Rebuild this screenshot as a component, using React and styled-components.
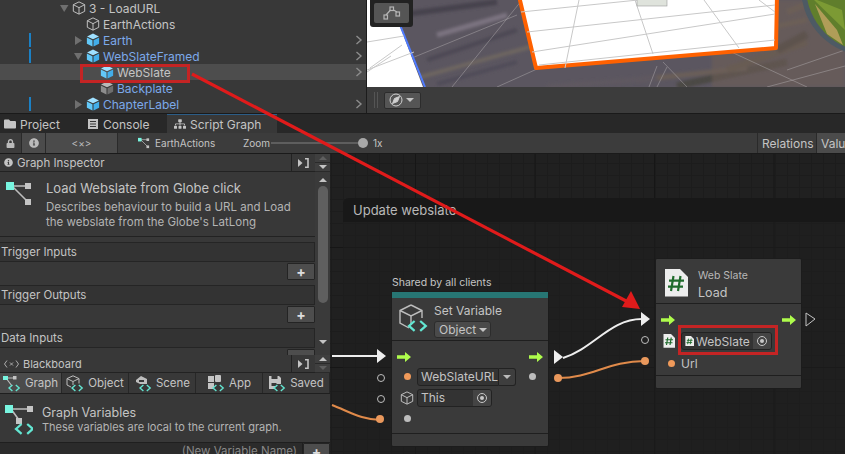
import React from 'react';
import styled, { createGlobalStyle } from 'styled-components';
import { FaLock, FaInfoCircle, FaFolder, FaSitemap } from 'react-icons/fa';

const GlobalStyle = createGlobalStyle`
  html, body {
    margin: 0;
    padding: 0;
    background: #282828;
    overflow: hidden;
  }
  * {
    box-sizing: border-box;
  }
`;

const Page = styled.div`
  position: relative;
  width: 845px;
  height: 454px;
  display: flex;
  flex-direction: column;
  overflow: hidden;
  font-family: Inter, "Liberation Sans", sans-serif;
  color: #c4c4c4;
  background: #282828;
`;

/* ---------- top area ---------- */

const TopArea = styled.div`
  display: flex;
  height: 114px;
  flex: none;
  border-bottom: 1px solid #1a1a1a;
`;

const Hierarchy = styled.div`
  width: 367px;
  flex: none;
  background: #383838;
  border-right: 1px solid #1c1c1c;
  overflow: hidden;
`;

const TreeRow = styled.div`
  position: relative;
  display: flex;
  align-items: center;
  height: 16px;
  padding-left: ${p => 60 + p.$depth * 14}px;
  font-size: 12px;
  background: ${p => (p.$selected ? '#4d4d4d' : 'transparent')};
  color: ${p => (p.$prefab ? '#7ca9ea' : '#c4c4c4')};
  &:first-child {
    margin-top: 0;
  }
`;

const Foldout = styled.span`
  width: 12px;
  flex: none;
  display: flex;
  align-items: center;
`;

const TreeIcon = styled.span`
  width: 17px;
  flex: none;
  display: flex;
  align-items: center;
`;

const ChangeBar = styled.span`
  position: absolute;
  left: 29px;
  top: 1px;
  bottom: 1px;
  width: 2px;
  background: #1b80c4;
`;

const RowChevron = styled.svg`
  position: absolute;
  right: 3px;
  top: 3px;
  width: 8px;
  height: 10px;
`;

const SceneView = styled.div`
  flex: 1;
  display: flex;
  flex-direction: column;
  min-width: 0;
`;

const SceneCanvas = styled.div`
  position: relative;
  height: 87px;
  flex: none;
  background: #5b5560;
  overflow: hidden;
`;

const SceneArt = styled.svg`
  display: block;
`;

const OverlayTool = styled.div`
  position: absolute;
  left: 3px;
  top: -3px;
  width: 43px;
  height: 30px;
  padding: 6px 4px 4px;
  background: #222;
  border-radius: 3px;
`;

const OverlayButton = styled.div`
  height: 20px;
  background: #555;
  border-radius: 2px;
  display: flex;
  align-items: center;
  justify-content: center;
`;

const SceneBar = styled.div`
  flex: 1;
  display: flex;
  align-items: center;
  gap: 6px;
  padding-left: 7px;
  background: #3c3c3c;
`;

const Grip = styled.span`
  width: 4px;
  height: 16px;
  border-left: 1px solid #555;
  border-right: 1px solid #555;
`;

const GizmoButton = styled.div`
  width: 37px;
  height: 17px;
  background: #555;
  border: 1px solid #2c2c2c;
  border-radius: 2px;
  display: flex;
  align-items: center;
  gap: 3px;
  padding-left: 4px;
`;

const ArrowDown = styled.span`
  width: 0;
  height: 0;
  border-left: ${p => p.$size || 4}px solid transparent;
  border-right: ${p => p.$size || 4}px solid transparent;
  border-top: ${p => p.$size || 4}px solid ${p => p.$color || '#c4c4c4'};
`;

const ArrowUp = styled.span`
  width: 0;
  height: 0;
  border-left: 4px solid transparent;
  border-right: 4px solid transparent;
  border-bottom: 4px solid ${p => p.$color || '#c4c4c4'};
`;

/* ---------- tabs + toolbar ---------- */

const TabStrip = styled.div`
  display: flex;
  height: 19px;
  flex: none;
  background: #282828;
`;

const Tab = styled.div`
  width: ${p => p.$w}px;
  display: flex;
  align-items: center;
  gap: 4px;
  padding-left: ${p => p.$pad}px;
  font-size: 12px;
  background: ${p => (p.$active ? '#383838' : 'transparent')};
  border-top: 1px solid ${p => (p.$active ? '#2c5d87' : 'transparent')};
`;

const GraphToolbar = styled.div`
  display: flex;
  align-items: stretch;
  height: 21px;
  flex: none;
  background: #3c3c3c;
  border-bottom: 1px solid #1a1a1a;
  font-size: 10px;
`;

const ToolButton = styled.div`
  width: ${p => p.$w}px;
  flex: none;
  display: flex;
  align-items: center;
  justify-content: center;
  background: ${p => (p.$on ? '#4b4b4b' : 'transparent')};
  border-right: 1px solid #2a2a2a;
  color: #bbb;
`;

const Crumb = styled.div`
  display: flex;
  align-items: center;
  gap: 5px;
  padding-left: 20px;
  width: 125px;
  flex: none;
`;

const ZoomLabel = styled.div`
  display: flex;
  align-items: center;
  width: 28px;
  flex: none;
`;

const ZoomTrack = styled.div`
  position: relative;
  width: 94px;
  height: 2px;
  flex: none;
  align-self: center;
  background: #5e5e5e;
`;

const ZoomThumb = styled.span`
  position: absolute;
  right: -3px;
  top: -4px;
  width: 10px;
  height: 10px;
  border-radius: 50%;
  background: #a8a8a8;
`;

const ZoomValue = styled.div`
  display: flex;
  align-items: center;
  margin-left: 8px;
`;

const ToolSpacer = styled.div`
  flex: 1;
`;

const SideTab = styled.div`
  width: ${p => p.$w}px;
  flex: none;
  display: flex;
  align-items: center;
  padding-left: 4px;
  overflow: hidden;
  white-space: nowrap;
  font-size: 12px;
  background: ${p => (p.$on ? '#4b4b4b' : 'transparent')};
  border-left: 1px solid #2a2a2a;
`;

/* ---------- left panels ---------- */

const Workspace = styled.div`
  flex: 1;
  display: flex;
  min-height: 0;
`;

const Sidebar = styled.div`
  width: 330px;
  flex: none;
  display: flex;
  flex-direction: column;
  background: #383838;
`;

const PanelHeader = styled.div`
  display: flex;
  height: 18px;
  flex: none;
  font-size: ${p => p.$small ? 11 : 11.5}px;
`;

const PanelTitle = styled.div`
  flex: 1;
  display: flex;
  align-items: center;
  gap: 4px;
  padding-left: 4px;
  border-bottom: 1px solid #222;
  border-right: 1px solid #222;
`;

const PinButton = styled.div`
  width: 23px;
  flex: none;
  display: flex;
  align-items: center;
  justify-content: center;
  border-bottom: 1px solid #222;
`;

const UpDown = styled.div`
  width: 15px;
  flex: none;
  display: flex;
  flex-direction: column;
  background: #3f3f3f;
`;

const UpDownCell = styled.div`
  flex: 1;
  display: flex;
  align-items: center;
  justify-content: center;
  border-bottom: 1px solid #2a2a2a;
`;

const InspectorWrap = styled.div`
  display: flex;
  flex-direction: column;
  height: 201px;
  flex: none;
  overflow: hidden;
`;

const InspectorScroll = styled.div`
  flex: 1;
  display: flex;
  min-height: 0;
`;

const InspectorBody = styled.div`
  width: 315px;
  flex: none;
`;

const InspectorIntro = styled.div`
  display: flex;
  height: 65px;
  padding: 8px 0 0 6px;
  gap: 13px;
  border-bottom: 1px solid #222;
  margin-bottom: 5px;
`;

const IntroTitle = styled.div`
  font-size: 13px;
  line-height: 16px;
`;

const IntroText = styled.div`
  margin-top: 4px;
  font-size: 11.5px;
  line-height: 15px;
  color: #b4b4b4;
`;

const SectionHead = styled.div`
  height: 20px;
  display: flex;
  align-items: center;
  padding-left: 1px;
  font-size: 11.5px;
  background: #333;
  border-top: 1px solid #252525;
  border-bottom: 1px solid #252525;
  border-right: 1px solid #252525;
`;

const SectionList = styled.div`
  height: 23px;
  display: flex;
  justify-content: flex-end;
  padding-top: 1px;
`;

const AddButton = styled.div`
  width: ${p => p.$w || 28}px;
  height: 17px;
  display: flex;
  align-items: center;
  justify-content: center;
  background: #4d4d4d;
  border: 1px solid #242424;
  border-radius: 1px;
  color: #ddd;
  font-size: 14px;
  font-weight: 700;
  line-height: 1;
`;

const ScrollRail = styled.div`
  flex: 1;
  display: flex;
  flex-direction: column;
  align-items: center;
  padding-top: 6px;
  background: #3a3a3a;
`;

const ScrollThumb = styled.div`
  width: 10px;
  height: 117px;
  margin: 4px 0 37px;
  background: #5f5f5f;
  border-radius: 5px;
`;

const BlackboardTabs = styled.div`
  display: flex;
  height: 21px;
  flex: none;
  border-bottom: 1px solid #1f1f1f;
  font-size: 11.5px;
`;

const BoardTab = styled.div`
  flex: ${p => (p.$first ? '0 0 62px' : '1')};
  display: flex;
  align-items: center;
  justify-content: center;
  gap: 3px;
  background: ${p => (p.$on ? '#4b4b4b' : 'transparent')};
  border-right: 1px solid #272727;
`;

const BoardIntro = styled.div`
  display: flex;
  flex: none;
  height: 48px;
  padding: 11px 0 0 5px;
  gap: 9px;
`;

const BoardTitle = styled.div`
  font-size: 12.5px;
  line-height: 15px;
`;

const BoardText = styled.div`
  font-size: 11px;
  line-height: 15px;
  color: #b4b4b4;
`;

const NewVarRow = styled.div`
  flex: 1;
  display: flex;
  border-top: 1px solid #1f1f1f;
`;

const NewVarInput = styled.div`
  flex: 1;
  padding: 1px 5px 0 0;
  text-align: right;
  font-size: 11.5px;
  color: #888;
  background: #2b2b2b;
  border-right: 1px solid #1f1f1f;
`;

/* ---------- canvas ---------- */

const Canvas = styled.div`
  position: relative;
  flex: 1;
  overflow: hidden;
  background-color: #202020;
  background-image:
    linear-gradient(to right, #161616 1px, transparent 1px),
    linear-gradient(to bottom, #161616 1px, transparent 1px),
    linear-gradient(to right, #1c1c1c 1px, transparent 1px),
    linear-gradient(to bottom, #1c1c1c 1px, transparent 1px);
  background-size: 119.5px 120px, 119.5px 120px, 12px 12px, 12px 12px;
  background-position: 85px 93px, 85px 93px, 1px 9px, 1px 9px;
`;

const Group = styled.div`
  position: absolute;
  left: 13px;
  top: 44px;
  right: -20px;
  bottom: -20px;
  border-radius: 6px 0 0 0;
  background: rgba(32, 32, 32, 0.45);
`;

const GroupHead = styled.div`
  height: 24px;
  display: flex;
  align-items: center;
  padding-left: 10px;
  font-size: 13px;
  background: #181818;
  border-radius: 6px 0 0 0;
  color: #b8b8b8;
`;

const WireLayer = styled.svg`
  position: absolute;
  left: 0;
  top: 0;
`;

const NodeBox = styled.div`
  position: absolute;
  left: ${p => p.$x}px;
  top: ${p => p.$y}px;
  width: ${p => p.$w}px;
  background: #3a3a3a;
  border: 1px solid #1c1c1c;
  border-radius: 2px;
`;

const NodeNote = styled.div`
  position: absolute;
  left: 0;
  top: -16px;
  font-size: 10.5px;
  white-space: nowrap;
`;

const NodeAccent = styled.div`
  height: 6px;
  background: #277674;
`;

const NodeHead = styled.div`
  display: flex;
  height: ${p => p.$h}px;
  padding: ${p => p.$pad};
  gap: ${p => p.$gap}px;
  border-bottom: 1px solid #1f1f1f;
`;

const NodeTitle = styled.div`
  font-size: ${p => p.$size}px;
  line-height: ${p => p.$lh}px;
  color: ${p => p.$color || '#c4c4c4'};
`;

const TypeSelect = styled.div`
  width: 57px;
  height: 17px;
  margin-top: 2px;
  display: flex;
  align-items: center;
  gap: 3px;
  padding-left: 4px;
  font-size: 12px;
  background: #4a4a4a;
  border: 1px solid #2c2c2c;
  border-radius: 3px;
`;

const NodeBody = styled.div`
  position: relative;
  height: ${p => p.$h}px;
  border-bottom: 1px solid #1f1f1f;
`;

const NodeFoot = styled.div`
  height: 12px;
`;

const FlowRow = styled.div`
  display: flex;
  justify-content: space-between;
  align-items: center;
  padding: 6px 5px 0;
  height: ${p => p.$h}px;
`;

const FieldRow = styled.div`
  display: flex;
  align-items: center;
  height: ${p => p.$h}px;
  padding-left: ${p => p.$pad}px;
`;

const DotSlot = styled.span`
  width: ${p => p.$w}px;
  flex: none;
  display: flex;
  justify-content: center;
`;

const Dot = styled.span`
  width: ${p => p.$size || 7}px;
  height: ${p => p.$size || 7}px;
  border-radius: 50%;
  background: ${p => p.$color};
`;

const Field = styled.div`
  width: ${p => p.$w}px;
  height: 18px;
  display: flex;
  align-items: center;
  padding-left: 3px;
  font-size: 12px;
  background: #333;
  border: 1px solid #222;
  border-radius: 3px 0 0 3px;
  white-space: nowrap;
`;

const FieldChevron = styled.div`
  width: 18px;
  height: 18px;
  display: flex;
  align-items: center;
  justify-content: center;
  background: #3e3e3e;
  border: 1px solid #222;
  border-left: none;
  border-radius: 0 3px 3px 0;
`;

const ObjectField = styled.div`
  width: ${p => p.$w}px;
  height: 18px;
  display: flex;
  align-items: center;
  font-size: 12px;
  background: #333;
  border: 1px solid #222;
  border-radius: 3px;
  white-space: nowrap;
`;

const ObjectLabel = styled.div`
  flex: 1;
  display: flex;
  align-items: center;
  gap: 2px;
  padding-left: 3px;
`;

const TargetCell = styled.div`
  width: 18px;
  height: 100%;
  display: flex;
  align-items: center;
  justify-content: center;
  background: #444;
  border-radius: 0 2px 2px 0;
`;

const Target = styled.span`
  width: 10px;
  height: 10px;
  border: 1px solid #c8c8c8;
  border-radius: 50%;
  display: flex;
  align-items: center;
  justify-content: center;
  &::after {
    content: '';
    width: 4px;
    height: 4px;
    border-radius: 50%;
    background: #c8c8c8;
  }
`;

const SidePort = styled.span`
  position: absolute;
  left: ${p => p.$x}px;
  top: ${p => p.$y}px;
  width: 8px;
  height: 8px;
  border: 1px solid #bdbdbd;
  border-radius: 50%;
`;

const SideDot = styled.span`
  position: absolute;
  left: ${p => p.$x}px;
  top: ${p => p.$y}px;
  width: 8px;
  height: 8px;
  border-radius: 50%;
  background: ${p => p.$color || '#bdbdbd'};
`;

const Annotation = styled.svg`
  position: absolute;
  left: 0;
  top: 0;
  pointer-events: none;
`;

const RedBox = styled.div`
  position: absolute;
  left: ${p => p.$x}px;
  top: ${p => p.$y}px;
  width: ${p => p.$w}px;
  height: ${p => p.$h}px;
  border: 3px solid #c42424;
  pointer-events: none;
`;

/* ---------- drawn icons ---------- */

function Cube({ size = 14, color = '#c4c4c4' }) {
  return (
    <svg width={size} height={size} viewBox="0 0 16 16" fill="none" stroke={color} strokeWidth="1.1">
      <path d="M8 1 14.5 4.2V11.8L8 15 1.5 11.8V4.2Z" />
      <path d="M1.5 4.2 8 7.6 14.5 4.2M8 7.6V15" />
    </svg>
  );
}

function PrefabCube({ grey }) {
  const top = grey ? '#b9b9b9' : '#9fe0ff';
  const left = grey ? '#8d8d8d' : '#62c8f8';
  const right = grey ? '#6e6e6e' : '#42aeea';
  return (
    <svg width="14" height="14" viewBox="0 0 16 16">
      <path d="M8 .6 14.8 4 8 7.2 1.2 4Z" fill={top} />
      <path d="M1 5 7.4 8.2V15.4L1 12.2Z" fill={left} />
      <path d="M15 5 8.6 8.2V15.4L15 12.2Z" fill={right} />
    </svg>
  );
}

function Tri({ open }) {
  return (
    <svg width="9" height="9" viewBox="0 0 9 9">
      <path d={open ? 'M0 1H8.5L4.2 8Z' : 'M1 0 8 4.5 1 9Z'} fill="#6f6f6f" />
    </svg>
  );
}

function Chevron() {
  return (
    <RowChevron viewBox="0 0 8 10" fill="none" stroke="#8c8c8c" strokeWidth="1.4">
      <path d="M1.5 1 6 5 1.5 9" />
    </RowChevron>
  );
}

function VarBrackets({ x = 0, y = 0, w = 1 }) {
  return (
    <g transform={`translate(${x} ${y}) scale(${w})`} fill="none" stroke="#63e6d2" strokeWidth="1.6">
      <path d="M4 0 0 3.5 4 7M8 0 12 3.5 8 7" />
    </g>
  );
}

function GraphGlyph({ size = 27, teal = true }) {
  return (
    <svg width={size} height={size} viewBox="0 0 27 27">
      <path d="M6 6H22M6 6 22 22" stroke="#bdbdbd" strokeWidth="1.6" fill="none" />
      <rect x="0" y="2" width="8" height="8" fill={teal ? '#78f5e0' : '#bbb'} />
      <rect x="19" y="3" width="6" height="6" fill="#c4c4c4" />
      <rect x="19" y="19" width="6" height="6" fill="#c4c4c4" />
    </svg>
  );
}

function PanelPin() {
  return (
    <svg width="11" height="10" viewBox="0 0 11 10">
      <path d="M0 1 4.5 5 0 9Z" fill="#c4c4c4" />
      <path d="M7 .8H10V9.2H7" fill="none" stroke="#c4c4c4" strokeWidth="1.6" />
    </svg>
  );
}

function HashDoc({ size = 24, tiny }) {
  return (
    <svg width={size} height={size * 1.17} viewBox="0 0 24 28">
      <path d="M1 0H16L24 8V27.5H1Z" fill="#ededed" />
      <path d="M9.5 7 7 22M16.5 7 14 22M5 11.5H20M4 17.5H19" stroke="#1f6b2c" strokeWidth={tiny ? 2.4 : 2.2} fill="none" />
    </svg>
  );
}

function FlowArrow() {
  return (
    <svg width="14" height="10" viewBox="0 0 14 10">
      <path d="M0 3.2H8V0L14 5 8 10V6.8H0Z" fill="#aefc4c" />
    </svg>
  );
}

function BoardGlyph({ kind }) {
  return (
    <svg width="19" height="17" viewBox="0 0 19 17" fill="none">
      {kind === 'graph' && (
        <g>
          <path d="M3 3H12M3 3 9 11" stroke="#bdbdbd" strokeWidth="1.2" />
          <rect x="0" y="1" width="5" height="4" fill="#78f5e0" />
          <rect x="10" y="1" width="3.5" height="3.5" fill="#c4c4c4" />
        </g>
      )}
      {kind === 'object' && (
        <g stroke="#bdbdbd" strokeWidth="1">
          <path d="M7 .8 13 3.6V8.5M7 .8 1 3.6V10L5 12M1 3.6 7 6.5 13 3.6M7 6.5V10" />
        </g>
      )}
      {kind === 'scene' && (
        <g fill="#bdbdbd">
          <path d="M7 1 13 4V9L6 9 2 7 2 5Z" />
          <path d="M5 5H10V7H5Z" fill="#383838" />
        </g>
      )}
      {kind === 'app' && (
        <g fill="#c4c4c4">
          <rect x="1" y="1" width="6" height="6" />
          <rect x="8" y="0" width="6" height="7" rx="1" />
          <rect x="1" y="8" width="6" height="6" />
        </g>
      )}
      {kind === 'saved' && (
        <g>
          <path d="M1 1H11L13 3V9H7V14H1Z" fill="#c4c4c4" />
          <rect x="3.5" y="1" width="6" height="3" fill="#383838" />
          <rect x="3.5" y="8" width="5" height="3" fill="#383838" />
        </g>
      )}
      <VarBrackets x={6} y={10} w={0.85} />
    </svg>
  );
}

function SceneDrawing() {
  const streaks = [
    [60, 60, 150, 30, '#4d4a55', 5],
    [50, 78, 170, 45, '#6e6660', 4],
    [70, 35, 140, 15, '#7b7380', 5],
    [40, 14, 130, 2, '#46434e', 6],
    [70, 84, 150, 62, '#504c58', 4],
    [310, 86, 420, 62, '#4c4845', 7],
    [270, 80, 380, 68, '#6a5f59', 5],
    [360, 70, 440, 42, '#63574f', 7],
    [410, 50, 440, 34, '#4a4541', 8],
    [390, 30, 440, 20, '#6a6058', 5],
    [420, 12, 445, 2, '#6c5f55', 6],
    [180, 87, 290, 78, '#5f5860', 5],
  ];
  return (
    <SceneArt width="478" height="87" viewBox="0 0 478 87">
      <defs>
        <filter id="soft">
          <feGaussianBlur stdDeviation="1.6" />
        </filter>
      </defs>
      <rect width="478" height="87" fill="#5b5660" />
      <g filter="url(#soft)">
        {streaks.map(([a, b, c, d, col, w], i) => (
          <line key={i} x1={a} y1={b} x2={c} y2={d} stroke={col} strokeWidth={w} />
        ))}
        <rect x="345" y="0" width="133" height="87" fill="#6d5f58" opacity=".55" />
      </g>
      {/* floor grid */}
      <g stroke="#b6b2b4" strokeOpacity=".45" strokeWidth="1">
        <path d="M85 87 155 0M40 60 150 15M130 87 190 60M282 87 290 66M290 87 300 67M320 87 296 62M440 87 360 50M420 70 478 50M400 87 478 66M478 28 440 0" />
      </g>
      {/* white plane on the left */}
      <path d="M0 0H23L56 87H0Z" fill="#fff" />
      <path d="M23 0 58 87" stroke="#4f7bff" strokeWidth="2" />
      <g stroke="#c9c9c9" strokeWidth="1">
        <path d="M0 42 37 36M0 70 47 52M3 68 35 45M0 72 24 56" />
      </g>
      {/* globe */}
      <circle cx="502" cy="-12" r="68" fill="#4d5a64" />
      <circle cx="504" cy="-13" r="65" fill="#607e2c" />
      <path d="M448 4 470 30 476 45 460 34Z" fill="#c4a564" opacity=".8" />
      <path d="M445 -2 475 10 478 30Z" fill="#7c9a34" />
      {/* plate */}
      <path d="M152 -4 169 68 409 48 410 -4Z" fill="#fff" stroke="#ff6100" strokeWidth="4" strokeLinejoin="round" />
      <g stroke="#c8c8c8" strokeWidth="1" fill="none">
        <path d="M154 12 310 -4M160 32 408 5M165 52 408 14M172 65 408 40M212 0 198 68M268 0 286 54M337 0 372 48M392 0 408 12" />
      </g>
      <rect x="270" y="-3" width="30" height="9" fill="#dfe3dc" stroke="#999" strokeWidth=".6" />
    </SceneArt>
  );
}

/* ---------- data ---------- */

const treeRows = [
  { label: '3 - LoadURL', depth: 0, fold: 'open', icon: 'cube' },
  { label: 'EarthActions', depth: 1, icon: 'cube' },
  { label: 'Earth', depth: 1, fold: 'closed', icon: 'prefab', prefab: true, bar: true, chevron: true },
  { label: 'WebSlateFramed', depth: 1, fold: 'open', icon: 'prefab', prefab: true, bar: true, chevron: true },
  { label: 'WebSlate', depth: 2, icon: 'prefab', selected: true, chevron: true },
  { label: 'Backplate', depth: 2, icon: 'grey', prefab: true },
  { label: 'ChapterLabel', depth: 1, fold: 'closed', icon: 'prefab', prefab: true, bar: true, chevron: true },
];

const boardTabs = [
  { label: 'Graph', kind: 'graph', on: true },
  { label: 'Object', kind: 'object' },
  { label: 'Scene', kind: 'scene' },
  { label: 'App', kind: 'app' },
  { label: 'Saved', kind: 'saved' },
];

const sections = ['Trigger Inputs', 'Trigger Outputs', 'Data Inputs'];

function TreeItem({ row }) {
  return (
    <TreeRow $depth={row.depth} $selected={row.selected} $prefab={row.prefab}>
      {row.bar && <ChangeBar />}
      <Foldout>{row.fold && <Tri open={row.fold === 'open'} />}</Foldout>
      <TreeIcon>
        {row.icon === 'cube' && <Cube size={14} />}
        {row.icon === 'prefab' && <PrefabCube />}
        {row.icon === 'grey' && <PrefabCube grey />}
      </TreeIcon>
      {row.label}
      {row.chevron && <Chevron />}
    </TreeRow>
  );
}

export default function App() {
  return (
    <Page>
      <GlobalStyle />

      <TopArea>
        <Hierarchy>
          {treeRows.map(row => <TreeItem key={row.label} row={row} />)}
        </Hierarchy>
        <SceneView>
          <SceneCanvas>
            <SceneDrawing />
            <OverlayTool>
              <OverlayButton>
                <svg width="18" height="15" viewBox="0 0 18 15" fill="none" stroke="#b5b5b5" strokeWidth="1.2">
                  <rect x="1" y="9" width="3.5" height="4" />
                  <rect x="13" y="6" width="3.5" height="4" />
                  <rect x="7" y="1" width="3.5" height="3.5" />
                  <path d="M3 9 7.5 4M10.5 4 14 6" />
                </svg>
              </OverlayButton>
            </OverlayTool>
          </SceneCanvas>
          <SceneBar>
            <Grip />
            <GizmoButton>
              <svg width="14" height="14" viewBox="0 0 14 14" fill="none" stroke="#d0d0d0" strokeWidth="1">
                <circle cx="7" cy="7" r="6" />
                <path d="M10.5 3.5 8.5 8.5 3.5 10.5 5.5 5.5Z" fill="#d0d0d0" />
              </svg>
              <ArrowDown />
            </GizmoButton>
          </SceneBar>
        </SceneView>
      </TopArea>

      <TabStrip>
        <Tab $w={84} $pad={4}><FaFolder size={12} color="#c4c4c4" />Project</Tab>
        <Tab $w={83} $pad={3}>
          <svg width="12" height="12" viewBox="0 0 12 12">
            <path d="M1 1H11V11H1Z" fill="#c4c4c4" />
            <path d="M3 3.5H9M3 6H9M3 8.5H9" stroke="#383838" />
          </svg>
          Console
        </Tab>
        <Tab $w={110} $pad={7} $active><FaSitemap size={12} color="#c4c4c4" />Script Graph</Tab>
      </TabStrip>

      <GraphToolbar>
        <ToolButton $w={22}><FaLock size={9} /></ToolButton>
        <ToolButton $w={24} $on><FaInfoCircle size={10} /></ToolButton>
        <ToolButton $w={72} $on>{'<×>'}</ToolButton>
        <Crumb>
          <GraphGlyph size={12} />
          EarthActions
        </Crumb>
        <ZoomLabel>Zoom</ZoomLabel>
        <ZoomTrack><ZoomThumb /></ZoomTrack>
        <ZoomValue>1x</ZoomValue>
        <ToolSpacer />
        <SideTab $w={59}>Relations</SideTab>
        <SideTab $w={29} $on>Values</SideTab>
      </GraphToolbar>

      <Workspace>
        <Sidebar>
          <InspectorWrap>
            <PanelHeader>
              <PanelTitle><FaInfoCircle size={9} />Graph Inspector</PanelTitle>
              <PinButton><PanelPin /></PinButton>
              <UpDown>
                <UpDownCell><ArrowUp $color="#5f5f5f" /></UpDownCell>
                <UpDownCell><ArrowDown $color="#c4c4c4" /></UpDownCell>
              </UpDown>
            </PanelHeader>
            <InspectorScroll>
              <InspectorBody>
                <InspectorIntro>
                  <GraphGlyph />
                  <div>
                    <IntroTitle>Load Webslate from Globe click</IntroTitle>
                    <IntroText>
                      Describes behaviour to build a URL and Load<br />
                      the webslate from the Globe's LatLong
                    </IntroText>
                  </div>
                </InspectorIntro>
                {sections.map(name => (
                  <React.Fragment key={name}>
                    <SectionHead>{name}</SectionHead>
                    <SectionList><AddButton>+</AddButton></SectionList>
                  </React.Fragment>
                ))}
              </InspectorBody>
              <ScrollRail>
                <ArrowUp />
                <ScrollThumb />
                <ArrowDown />
              </ScrollRail>
            </InspectorScroll>
          </InspectorWrap>

          <PanelHeader $small>
            <PanelTitle>
              <svg width="15" height="8" viewBox="0 0 15 8" fill="none" stroke="#aaa" strokeWidth="1">
                <path d="M3 .5 .5 4 3 7.5M12 .5 14.5 4 12 7.5M6 2.5 9 5.5M9 2.5 6 5.5" />
              </svg>
              Blackboard
            </PanelTitle>
            <PinButton><PanelPin /></PinButton>
            <UpDown>
              <UpDownCell><ArrowUp $color="#c4c4c4" /></UpDownCell>
              <UpDownCell><ArrowDown $color="#5f5f5f" /></UpDownCell>
            </UpDown>
          </PanelHeader>

          <BlackboardTabs>
            {boardTabs.map((t, i) => (
              <BoardTab key={t.label} $on={t.on} $first={i === 0}>
                <BoardGlyph kind={t.kind} />
                {t.label}
              </BoardTab>
            ))}
          </BlackboardTabs>

          <BoardIntro>
            <svg width="28" height="30" viewBox="0 0 28 30" fill="none">
              <path d="M6 4H24M6 4 14 15" stroke="#bdbdbd" strokeWidth="1.6" />
              <rect x="0" y="0" width="8" height="8" fill="#78f5e0" />
              <rect x="22" y="1" width="6" height="6" fill="#c4c4c4" />
              <rect x="11" y="13" width="6" height="6" fill="#c4c4c4" />
              <VarBrackets x={11} y={19} w={1.4} />
            </svg>
            <div>
              <BoardTitle>Graph Variables</BoardTitle>
              <BoardText>These variables are local to the current graph.</BoardText>
            </div>
          </BoardIntro>

          <NewVarRow>
            <NewVarInput>(New Variable Name)</NewVarInput>
            <AddButton $w={27}>+</AddButton>
          </NewVarRow>
        </Sidebar>

        <Canvas>
          <Group><GroupHead>Update webslate</GroupHead></Group>

          <NodeBox $x={61} $y={137} $w={158}>
            <NodeNote>Shared by all clients</NodeNote>
            <NodeAccent />
            <NodeHead $h={43} $pad="5px 0 0 6px" $gap={6}>
              <svg width="30" height="30" viewBox="0 0 30 30" fill="none">
                <path d="M13 2 24 7.5V15M13 2 2 7.5V20L11 25M2 7.5 13 13 24 7.5M13 13V22" stroke="#bdbdbd" strokeWidth="1.4" />
                <VarBrackets x={11} y={18} w={1.4} />
              </svg>
              <div>
                <NodeTitle $size={12} $lh={16}>Set Variable</NodeTitle>
                <TypeSelect>Object<ArrowDown /></TypeSelect>
              </div>
            </NodeHead>
            <NodeBody $h={93}>
              <FlowRow $h={25}><FlowArrow /><FlowArrow /></FlowRow>
              <FieldRow $h={21} $pad={5}>
                <DotSlot $w={20}><Dot $color="#f09a5a" /></DotSlot>
                <Field $w={85}>WebSlateURL</Field>
                <FieldChevron><ArrowDown $color="#bbb" /></FieldChevron>
                <DotSlot $w={32}><Dot $color="#bdbdbd" /></DotSlot>
              </FieldRow>
              <FieldRow $h={21} $pad={5}>
                <DotSlot $w={20}><Cube size={14} /></DotSlot>
                <ObjectField $w={75}>
                  <ObjectLabel>This</ObjectLabel>
                  <TargetCell><Target /></TargetCell>
                </ObjectField>
              </FieldRow>
              <FieldRow $h={21} $pad={5}>
                <DotSlot $w={20}><Dot $color="#bdbdbd" /></DotSlot>
              </FieldRow>
            </NodeBody>
            <NodeFoot />
          </NodeBox>

          <NodeBox $x={325} $y={104} $w={147}>
            <NodeHead $h={45} $pad="10px 0 0 8px" $gap={10}>
              <HashDoc />
              <div>
                <NodeTitle $size={10.5} $lh={14} $color="#b8b8b8">Web Slate</NodeTitle>
                <NodeTitle $size={12.5} $lh={20}>Load</NodeTitle>
              </div>
            </NodeHead>
            <NodeBody $h={72}>
              <FlowRow $h={25}><FlowArrow /><FlowArrow /></FlowRow>
              <FieldRow $h={24} $pad={6}>
                <DotSlot $w={13}><HashDoc size={12} tiny /></DotSlot>
                <DotSlot $w={6} />
                <ObjectField $w={91}>
                  <ObjectLabel><HashDoc size={9} tiny />WebSlate</ObjectLabel>
                  <TargetCell><Target /></TargetCell>
                </ObjectField>
              </FieldRow>
              <FieldRow $h={21} $pad={6}>
                <DotSlot $w={19}><Dot $color="#f09a5a" /></DotSlot>
                <NodeTitle $size={12} $lh={16}>Url</NodeTitle>
              </FieldRow>
            </NodeBody>
            <NodeFoot />
          </NodeBox>

          <WireLayer width="515" height="300" viewBox="0 0 515 300" fill="none">
            <path d="M2 202H48" stroke="#eee" strokeWidth="2" />
            <path d="M47 195 56 202 47 209Z" fill="#eee" />
            <path d="M233 204C264 194 280 165 312 165" stroke="#eee" strokeWidth="2" />
            <path d="M224 196 233 203 224 210Z" fill="#eee" />
            <path d="M311 158 320 165 311 172Z" fill="#eee" />
            <path d="M476 159 485 165 476 172Z" stroke="#c4c4c4" />
            <path d="M228 224C262 224 278 207 315 207" stroke="#e08a4a" strokeWidth="2" />
            <path d="M2 251C20 258 32 266 51 266" stroke="#e08a4a" strokeWidth="2" />
          </WireLayer>

          <SidePort $x={47} $y={220} />
          <SidePort $x={47} $y={241} />
          <SideDot $x={46} $y={261} $color="#e9985c" />
          <SideDot $x={224} $y={220} $color="#e9985c" />
          <SidePort $x={311} $y={182} />
          <SideDot $x={311} $y={203} $color="#e9985c" />
        </Canvas>
      </Workspace>

      <Annotation width="845" height="454" viewBox="0 0 845 454" fill="none">
        <path d="M192 74 630 303" stroke="#e01b1b" strokeWidth="3.2" />
        <path d="M640 309 622 307 631 291Z" fill="#e01b1b" />
      </Annotation>
      <RedBox $x={80} $y={64} $w={110} $h={19} />
      <RedBox $x={678} $y={325} $w={100} $h={30} />
    </Page>
  );
}
